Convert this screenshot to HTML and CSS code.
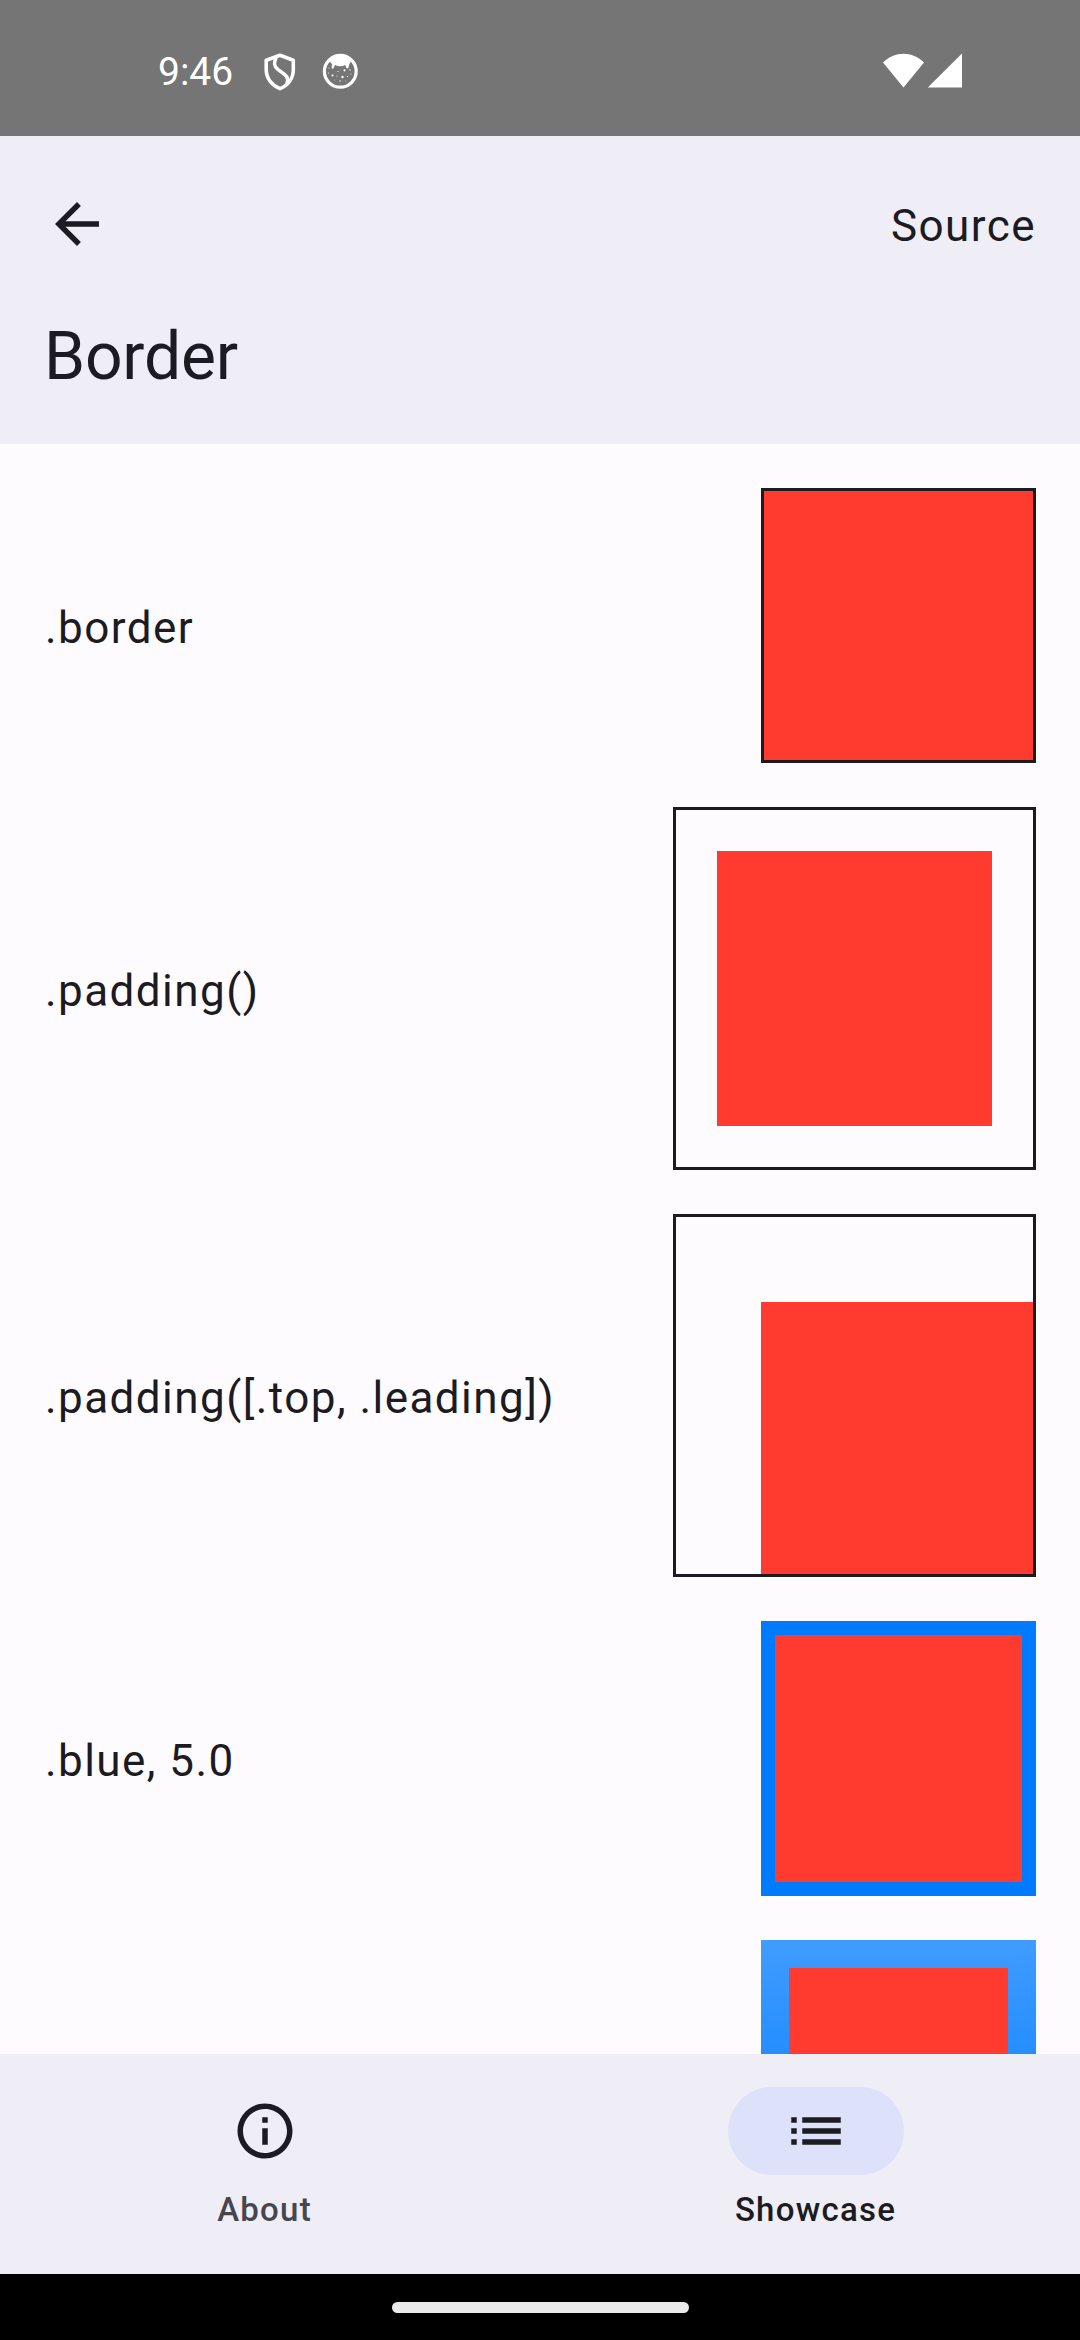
FILE: index.html
```html
<!DOCTYPE html>
<html lang="en">
<head>
<meta charset="utf-8">
<title>Border</title>
<link rel="stylesheet" href="styles.css">
</head>
<body>
<div class="screen">
  <div class="status-bar">
    <span class="clock">9:46</span>
    <svg class="status-shield" width="32" height="38" viewBox="0 0 32 38" fill="none" stroke="#fff" stroke-width="3.6" stroke-linejoin="round">
      <path d="M16 2.3 L29.3 7.2 V16.5 C29.3 25.5 24 32.5 16 35.7 C8 32.5 2.2 25.5 2.2 16.5 V7.2 Z"/>
      <path d="M12.2 4.5 C9.5 9 10.2 13.5 13.8 16.4 L20.5 21.4 C23.5 23.8 24.6 27 22.8 31"/>
    </svg>
    <svg class="status-cat" width="36" height="36" viewBox="0 0 36 36">
      <circle cx="18.300" cy="18.300" r="15.900" fill="none" stroke="#fff" stroke-width="3.200"/>
      <path fill="#fff" d="M7 8 Q18 -1 29.500 8 L27.500 10.500 L26.200 15.500 L24.300 15 L23.400 12 Q18 14.400 13 12 L11.300 15.800 L9.600 15.200 L10 11 Z"/>
      <g fill="#fff">
        <circle cx="22.500" cy="17.300" r="1.100"/><circle cx="10.500" cy="22.500" r="1.100"/><circle cx="20.500" cy="24" r="1.200"/>
        <circle cx="16" cy="18.500" r=".6"/><circle cx="28" cy="17" r=".7"/><circle cx="6.500" cy="20" r=".5"/>
        <circle cx="15" cy="23" r=".5"/><circle cx="25.500" cy="23.500" r=".7"/><circle cx="18" cy="28" r=".7"/>
        <circle cx="12.500" cy="27" r=".4"/><circle cx="23.500" cy="28" r=".4"/><circle cx="29" cy="21" r=".5"/>
        <circle cx="7" cy="15" r=".5"/>
      </g>
    </svg>
    <svg class="status-signal" width="80" height="36" viewBox="0 0 80 36" fill="#fff">
      <path d="M20.500 34.500 L0 9.500 C11.500 -2.300 29.500 -2.300 41 9.500 Z"/>
      <path d="M79 .5 V34.600 H44.800 Z"/>
    </svg>
  </div>

  <header class="app-bar">
    <div class="toolbar">
      <svg class="icon" viewBox="0 0 24 24"><path d="M20 11H7.830l5.590-5.590L12 4l-8 8 8 8 1.410-1.410L7.830 13H20v-2z"/></svg>
      <span class="body-text">Source</span>
    </div>
    <h1 class="title">Border</h1>
  </header>

  <main class="content">
    <div class="row"><span class="body-text">.border</span><div class="swatch outlined"><div class="fill"></div></div></div>
    <div class="row"><span class="body-text">.padding()</span><div class="swatch outlined inset-all"><div class="fill"></div></div></div>
    <div class="row"><span class="body-text">.padding([.top, .leading])</span><div class="swatch outlined inset-top-leading"><div class="fill"></div></div></div>
    <div class="row"><span class="body-text">.blue, 5.0</span><div class="swatch blue"><div class="fill"></div></div></div>
    <div class="row"><div class="swatch gradient"><div class="fill"></div></div></div>
  </main>

  <nav class="nav-bar">
    <div class="nav-item">
      <div class="pill"><svg class="icon" viewBox="0 0 24 24"><path d="M11 7h2v2h-2zm0 4h2v6h-2zm1-9C6.480 2 2 6.480 2 12s4.480 10 10 10 10-4.480 10-10S17.520 2 12 2zm0 18c-4.410 0-8-3.590-8-8s3.590-8 8-8 8 3.590 8 8-3.590 8-8 8z"/></svg></div>
      <span class="nav-label">About</span>
    </div>
    <div class="nav-item selected">
      <div class="pill"><svg class="icon" viewBox="0 0 24 24"><path d="M3 13h2v-2H3v2zm0 4h2v-2H3v2zm0-8h2V7H3v2zm4 4h14v-2H7v2zm0 4h14v-2H7v2zM7 7v2h14V7H7z"/></svg></div>
      <span class="nav-label">Showcase</span>
    </div>
  </nav>
  <div class="gesture-bar"><div class="handle"></div></div>
</div>
</body>
</html>
```

FILE: styles.css
```css
* { box-sizing: border-box; }
body { margin: 0; font-family: Roboto, sans-serif; color: #1b1b21; }
.screen {
  width: 1080px;
  height: 2340px;
  display: flex;
  flex-direction: column;
  overflow: hidden;
  background: #fefbff;
}
.screen svg { display: block; flex: none; }

.status-bar {
  flex: none;
  height: 136px;
  padding: 53px 117px 0 158px;
  display: flex;
  align-items: flex-start;
  background: #757575;
  color: #fff;
}
.clock { width: 106px; font-size: 39px; line-height: 38px; }
.status-cat { margin-left: 26px; }
.status-signal { margin-left: auto; }

.app-bar {
  flex: none;
  height: 308px;
  padding: 55px 44px 0;
  background: #efedf6;
}
.toolbar {
  display: flex;
  justify-content: space-between;
  align-items: center;
  height: 66px;
}
.icon { width: 66px; height: 66px; fill: #1b1b21; }
.title {
  margin: 56px 0 0;
  font-size: 66px;
  font-weight: 400;
  line-height: 88px;
  letter-spacing: -0.2px;
}
.body-text {
  font-size: 44px;
  line-height: 66px;
  letter-spacing: 1.45px;
  padding-top: 3px;
}

.content {
  flex: 1;
  min-height: 0;
  overflow: hidden;
  padding: 44px 44px 0;
  display: flex;
  flex-direction: column;
  gap: 44px;
}
.row {
  flex: none;
  display: flex;
  align-items: center;
}
.row .body-text { padding: 5px 0 0 1px; }
.swatch { margin-left: auto; display: grid; }
.fill { width: 275px; height: 275px; background: #ff3b30; }
.outlined { border: 3px solid #1b1b21; }
.outlined .fill { width: 269px; height: 269px; }
.inset-all { padding: 41px; }
.inset-all .fill { width: 275px; height: 275px; }
.inset-top-leading { padding: 85px 0 0 85px; }
.inset-top-leading .fill { width: 272px; height: 272px; }
.blue { padding: 14px; background: #007aff; }
.blue .fill { width: 247px; height: 247px; }
.gradient { padding: 28px; background: linear-gradient(#409cff, #007aff); }
.gradient .fill { width: 219px; height: 219px; }

.nav-bar {
  flex: none;
  height: 220px;
  padding-top: 33px;
  display: flex;
  gap: 22px;
  background: #efedf6;
}
.nav-item {
  flex: 1;
  display: flex;
  flex-direction: column;
  align-items: center;
  gap: 13px;
  color: #46464f;
}
.nav-item.selected { color: #1b1b21; }
.pill {
  width: 176px;
  height: 88px;
  border-radius: 44px;
  display: flex;
  align-items: center;
  justify-content: center;
}
.selected .pill { background: #dde1f9; }
.nav-label {
  font-size: 33px;
  font-weight: 500;
  line-height: 44px;
  letter-spacing: 1.25px;
}

.gesture-bar {
  flex: none;
  height: 66px;
  display: flex;
  align-items: center;
  justify-content: center;
  background: #000;
}
.handle { width: 297px; height: 11px; border-radius: 6px; background: #ebebeb; }
```
